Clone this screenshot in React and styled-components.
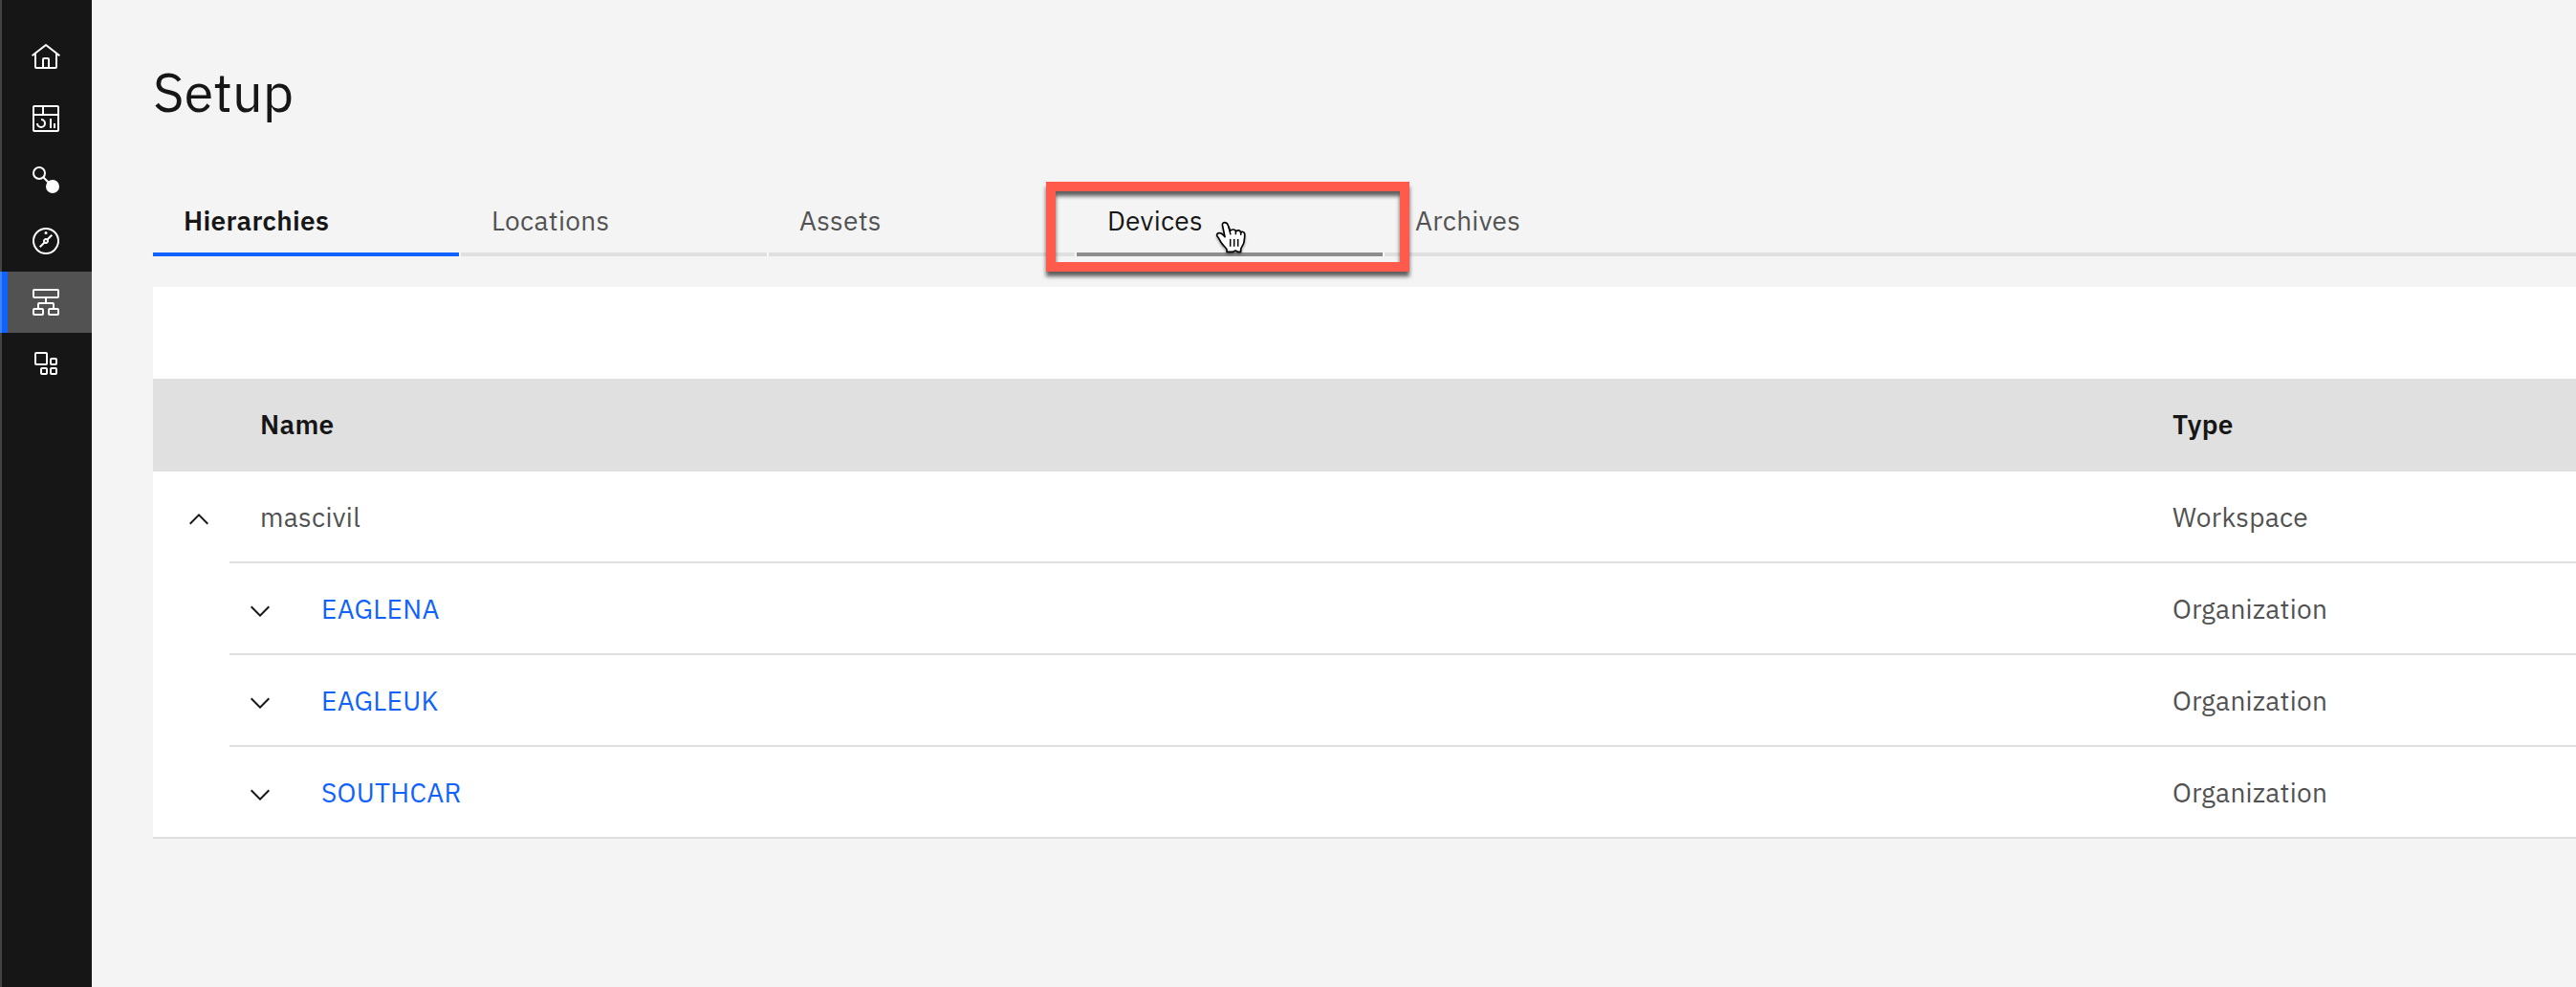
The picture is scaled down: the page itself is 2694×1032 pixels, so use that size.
import React from "react";
import styled, { createGlobalStyle, css } from "styled-components";

const GlobalStyle = createGlobalStyle`
  *, *::before, *::after { box-sizing: border-box; }
  body {
    margin: 0;
    background: #f4f4f4;
    color: #161616;
    font: 400 28px/37px "IBM Plex Sans", Roboto, sans-serif;
    letter-spacing: 0.32px;
  }
`;

const Shell = styled.div`
  display: flex;
  height: 1032px;
  overflow: hidden;
`;

const SideNav = styled.nav`
  flex: none;
  width: 96px;
  padding-top: 28px;
  background: #161616;
  position: relative;

  &::after {
    content: "";
    position: absolute;
    inset: 0 auto 0 0;
    width: 2px;
    background: rgba(255, 255, 255, 0.2);
  }
`;

const NavItem = styled.a`
  display: flex;
  align-items: center;
  height: 64px;
  padding-left: 24px;
  border-left: 8px solid ${(p) => (p.$active ? "#0f62fe" : "transparent")};
  background: ${(p) => (p.$active ? "#525252" : "transparent")};
  color: #fff;
`;

const Icon = styled.svg`
  display: block;
  width: 32px;
  height: 32px;
  fill: currentColor;
`;

const Main = styled.main`
  flex: 1;
  min-width: 0;
  padding: 64px 0 0 64px;
`;

const Title = styled.h1`
  margin: 0 0 60px;
  font-size: 56px;
  font-weight: 400;
  line-height: 64px;
  letter-spacing: 0;
`;

const TabBar = styled.div`
  display: flex;
  gap: 2px;
  height: 80px;
  background: linear-gradient(#f8f8f8, #f8f8f8) left bottom / 1290px 4px no-repeat;
`;

const tabState = {
  selected: css`
    color: #161616;
    font-weight: 600;
    border-color: #0f62fe;
  `,
  hovered: css`
    color: #161616;
    border-color: #8d8d8d;
  `,
};

const Tab = styled.div`
  position: relative;
  flex: ${(p) => (p.$grow ? "1 0 320px" : "none")};
  width: 320px;
  padding: 24px 32px 0;
  color: #525252;
  border-bottom: 4px solid #e0e0e0;
  ${(p) => tabState[p.$state]}
`;

const Highlight = styled.div`
  position: absolute;
  z-index: 1;
  left: -32px;
  top: 2px;
  width: 380px;
  height: 94px;
  border: 10px solid #ff5a4c;
  filter: drop-shadow(0 5px 2px rgba(0, 0, 0, 0.62));
`;

const Pointer = styled.svg`
  position: absolute;
  z-index: 2;
  left: 124px;
  top: 32px;
  width: 60px;
  height: 60px;
  filter: drop-shadow(0 2px 1px rgba(0, 0, 0, 0.35));
`;

const TablePanel = styled.section`
  margin-top: 32px;
  background: #fff;
  border-bottom: 2px solid #e0e0e0;
`;

const Toolbar = styled.div`
  height: 96px;
`;

const HeaderRow = styled.div`
  display: grid;
  grid-template-columns: 2000px 1fr;
  align-items: center;
  height: 97px;
  padding: 0 0 2px 112px;
  background: #e0e0e0;
  font-weight: 600;
`;

const Row = styled.div`
  display: grid;
  grid-template-columns: ${(p) => 2080 - p.$indent}px 1fr;
  align-items: center;
  height: ${(p) => (p.$last ? 94 : 96)}px;
  padding: 1px 0 ${(p) => (p.$last ? 0 : 2)}px ${(p) => p.$indent + 32}px;
  color: #525252;
  background: ${(p) =>
    p.$last ? "none" : "linear-gradient(#e0e0e0, #e0e0e0) 80px bottom / 100% 2px no-repeat"};
`;

const NameCell = styled.div`
  display: flex;
  align-items: center;
  gap: 48px;
  color: ${(p) => (p.$link ? "#0f62fe" : "#525252")};
`;

const Chevron = styled(Icon)`
  margin-top: 5px;
  color: #161616;
  transform: ${(p) => (p.$open ? "none" : "rotate(180deg)")};
`;

const outline = { fill: "none", stroke: "currentColor", strokeWidth: 2 };

const HomeIcon = () => (
  <Icon viewBox="0 0 32 32">
    <path d="M16.61 2.21a1.01 1.01 0 0 0-1.24 0L1 13.42l1.24 1.57L4 13.62V26a2 2 0 0 0 2 2h20a2 2 0 0 0 2-2V13.63L29.76 15 31 13.43ZM18 26h-4v-8h4Zm2 0v-8a2 2 0 0 0-2-2h-4a2 2 0 0 0-2 2v8H6V12.06l10-7.79 10 7.8V26Z" />
  </Icon>
);

const DashboardIcon = () => (
  <Icon viewBox="0 0 32 32">
    <path d="M24 21h2v5h-2zM20 16h2v10h-2zM11 26a5 5 0 0 1-5-5h2a3 3 0 1 0 3-3v-2a5 5 0 0 1 0 10Z" />
    <path d="M28 2H4a2 2 0 0 0-2 2v24a2 2 0 0 0 2 2h24a2 2 0 0 0 2-2V4a2 2 0 0 0-2-2Zm0 9H14V4h14ZM12 4v7H4V4ZM4 28V13h24v15Z" />
  </Icon>
);

const NodesIcon = () => (
  <Icon viewBox="0 0 32 32">
    <circle cx="9" cy="9" r="6" {...outline} />
    <path d="M13.2 13.2 19 19" {...outline} />
    <circle cx="23" cy="23" r="7" />
  </Icon>
);

const CompassIcon = () => (
  <Icon viewBox="0 0 32 32">
    <circle cx="16" cy="16" r="13" {...outline} />
    <circle cx="16" cy="7.5" r="1.5" />
    <path d="M23 10.41 21.59 9l-4.3 4.3a3 3 0 0 0-4 4L9 21.59 10.41 23l4.3-4.3a3 3 0 0 0 4-4ZM17 16a1 1 0 1 1-1-1 1 1 0 0 1 1 1Z" />
  </Icon>
);

const HierarchyIcon = () => (
  <Icon viewBox="0 0 32 32">
    <g {...outline}>
      <rect x="3" y="3" width="26" height="8" rx="1" />
      <rect x="3" y="23" width="10" height="6" rx="1" />
      <rect x="19" y="23" width="10" height="6" rx="1" />
      <path d="M16 11v6M8 23v-5a1 1 0 0 1 1-1h14a1 1 0 0 1 1 1v5" />
    </g>
  </Icon>
);

const BlocksIcon = () => (
  <Icon viewBox="0 0 32 32">
    <g {...outline}>
      <rect x="5" y="5" width="12" height="12" rx="1" />
      <rect x="21" y="11" width="6" height="6" rx="1" />
      <rect x="11" y="21" width="6" height="6" rx="1" />
      <rect x="21" y="21" width="6" height="6" rx="1" />
    </g>
  </Icon>
);

const HandPointer = () => (
  <Pointer viewBox="0 0 180 180">
    <path
      d="M92 38C86 38 84 43 86 49L93 83C88 77 83 71 77 71C70 70 66 75 69 81C76 88 78 98 86 107C93 115 99 119 99 124L99 130L119 130L126 126L133 130L143 130L143 121C145 113 152 108 153 99C154 90 156 84 155 73C154 67 147 65 143 70C142 62 132 60 128 66C126 59 115 58 110 64L102 45C100 40 97 38 92 38Z"
      fill="#fff"
      stroke="#000"
      strokeWidth="5"
      strokeLinejoin="round"
    />
    <path
      d="M104 50 111 76M127 64V76M143 69V78M110 90V113M122 90V113M134 90V113"
      fill="none"
      stroke="#000"
      strokeWidth="4.5"
    />
  </Pointer>
);

const navItems = [
  { id: "home", Glyph: HomeIcon },
  { id: "dashboard", Glyph: DashboardIcon },
  { id: "nodes", Glyph: NodesIcon },
  { id: "explore", Glyph: CompassIcon },
  { id: "setup", Glyph: HierarchyIcon, active: true },
  { id: "blocks", Glyph: BlocksIcon },
];

const tabs = [
  { label: "Hierarchies", state: "selected" },
  { label: "Locations" },
  { label: "Assets" },
  { label: "Devices", state: "hovered" },
  { label: "Archives", grow: true },
];

const rows = [
  { name: "mascivil", type: "Workspace", indent: 0, open: true },
  { name: "EAGLENA", type: "Organization", indent: 64, link: true },
  { name: "EAGLEUK", type: "Organization", indent: 64, link: true },
  { name: "SOUTHCAR", type: "Organization", indent: 64, link: true },
];

export default function App() {
  return (
    <Shell>
      <GlobalStyle />
      <SideNav>
        {navItems.map(({ id, Glyph, active }) => (
          <NavItem key={id} $active={active}>
            <Glyph />
          </NavItem>
        ))}
      </SideNav>
      <Main>
        <Title>Setup</Title>
        <TabBar>
          {tabs.map((t) => (
            <Tab key={t.label} $state={t.state} $grow={t.grow}>
              {t.label}
              {t.state === "hovered" && (
                <>
                  <Highlight />
                  <HandPointer />
                </>
              )}
            </Tab>
          ))}
        </TabBar>
        <TablePanel>
          <Toolbar />
          <HeaderRow>
            <span>Name</span>
            <span>Type</span>
          </HeaderRow>
          {rows.map((r, i) => (
            <Row key={r.name} $indent={r.indent} $last={i === rows.length - 1}>
              <NameCell $link={r.link}>
                <Chevron viewBox="0 0 16 16" $open={r.open}>
                  <path d="M8 5l5 5-.7.7L8 6.4l-4.3 4.3L3 10z" />
                </Chevron>
                <span>{r.name}</span>
              </NameCell>
              <span>{r.type}</span>
            </Row>
          ))}
        </TablePanel>
      </Main>
    </Shell>
  );
}
